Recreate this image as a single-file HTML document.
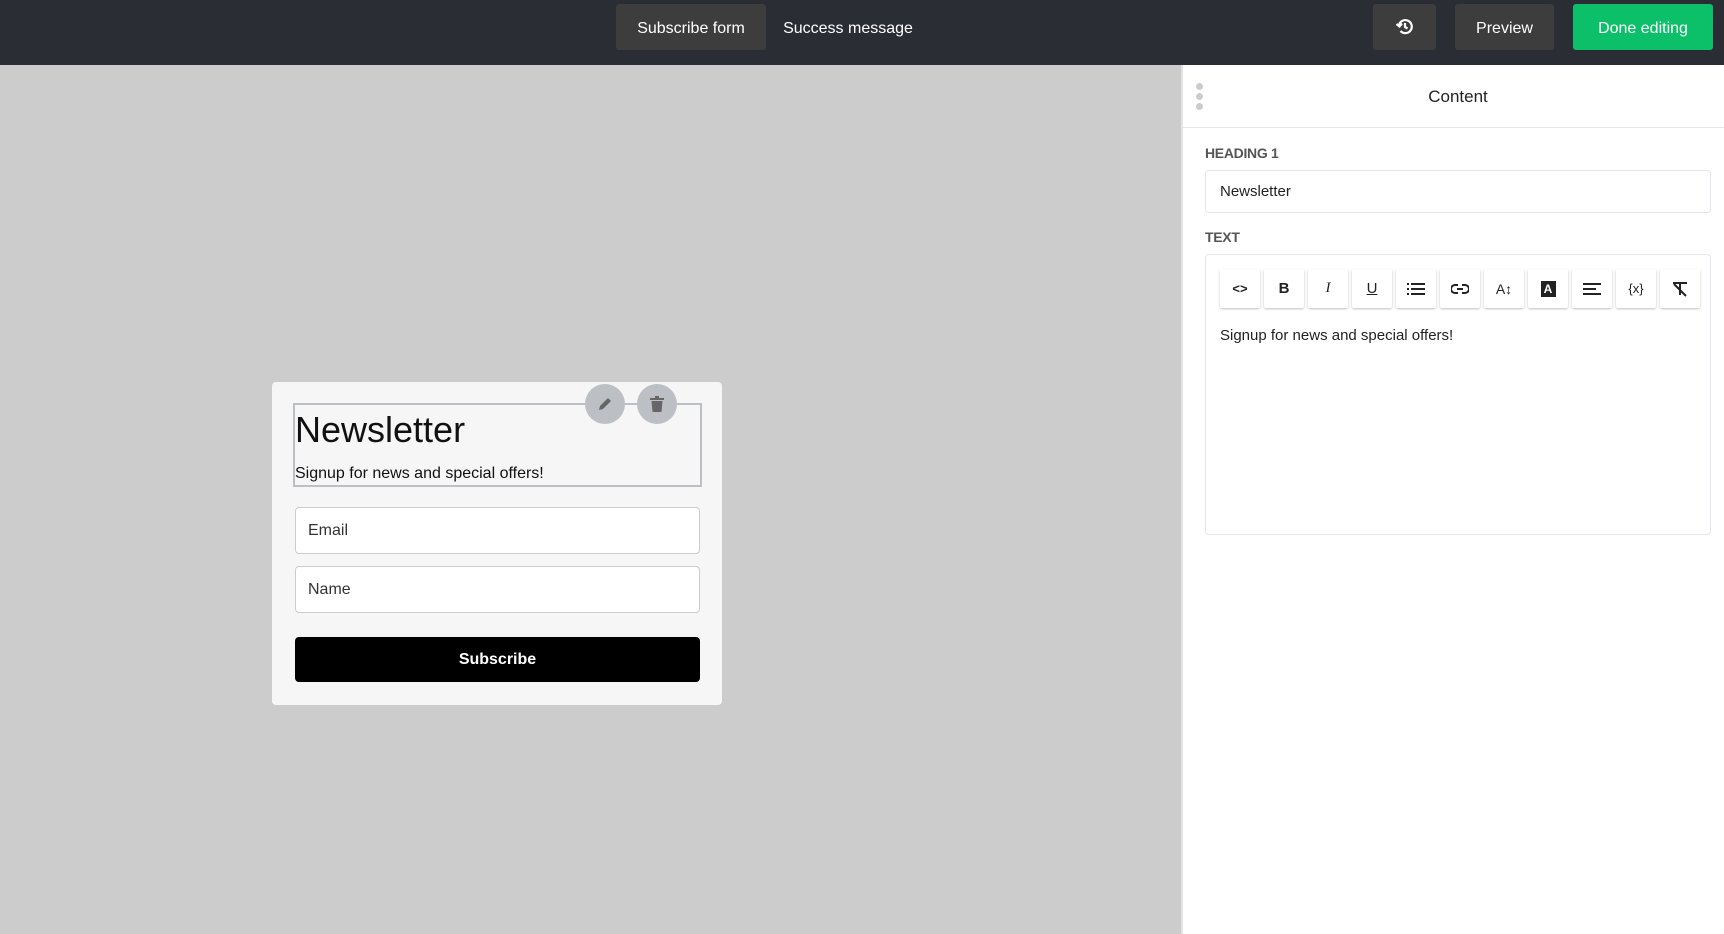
<!DOCTYPE html>
<html><head><style>
*{box-sizing:border-box;margin:0;padding:0}
body{width:1724px;height:934px;overflow:hidden;background:#ccc;font-family:"Liberation Sans",sans-serif;position:relative}
.top{position:absolute;left:0;top:0;width:1724px;height:65px;background:#2a2d33}
.tb{position:absolute;top:4px;height:46px;border-radius:3px;color:#fff;font-size:16px;display:flex;align-items:center;justify-content:center;padding-top:3px}
.panel{position:absolute;left:1181px;top:65px;width:543px;height:869px;background:#fff;border-left:2px solid #e4e4e4}
.lbl{position:absolute;left:22px;font-size:14px;font-weight:bold;color:#555;letter-spacing:-0.3px}
.ib{position:absolute;left:22px;width:506px;border:1px solid #e3e6ea;border-radius:4px;background:#fff}
.btn{position:absolute;top:14px;width:40px;height:39px;background:#fff;box-shadow:0 1px 2px rgba(0,0,0,.25);border-radius:2px;display:flex;align-items:center;justify-content:center;font-size:15px;color:#222}
.card{position:absolute;left:272px;top:382px;width:450px;height:323px;background:#f6f6f6;border-radius:4px}
.inp{position:absolute;left:23px;width:405px;height:47px;background:#fff;border:1px solid #ccc;border-radius:4px;font-size:16px;color:#333;padding-left:12px;line-height:45px}
.circ{position:absolute;width:40px;height:40px;border-radius:50%;background:#bcc0c4;display:flex;align-items:center;justify-content:center}
</style></head><body>
<div class="top">
 <div class="tb" style="left:616px;width:150px;background:#3d3d3d">Subscribe form</div>
 <div class="tb" style="left:782px;width:132px">Success message</div>
 <div class="tb" style="left:1373px;width:63px;background:#3d3d3d;padding-top:0"><svg width="20" height="20" viewBox="0 0 20 20" fill="none" stroke="#fff" stroke-width="2.2"><path d="M4 8a6.5 6.5 0 1 1 1.5 6"/><path d="M1.5 7l3 2.5 2.5-3" /><path d="M10 6v4l2.5 1.5"/></svg></div>
 <div class="tb" style="left:1455px;width:99px;background:#3d3d3d">Preview</div>
 <div class="tb" style="left:1573px;width:140px;background:#0cc06a">Done editing</div>
</div>
<div class="panel">
 <div style="position:absolute;left:13px;top:18px;width:8px">
  <div style="width:7px;height:7px;border-radius:50%;background:#ccc;margin-bottom:3px"></div>
  <div style="width:7px;height:7px;border-radius:50%;background:#ccc;margin-bottom:3px"></div>
  <div style="width:7px;height:7px;border-radius:50%;background:#ccc"></div></div>
 <div style="position:absolute;left:0;width:550px;top:22px;text-align:center;font-size:17px;color:#222">Content</div>
 <div style="position:absolute;left:0;top:62px;width:541px;height:1px;background:#e3e6ea"></div>
 <div class="lbl" style="top:80px">HEADING 1</div>
 <div class="ib" style="top:105px;height:43px;font-size:15px;color:#222;padding-left:14px;line-height:41px">Newsletter</div>
 <div class="lbl" style="top:164px">TEXT</div>
 <div class="ib" style="top:189px;height:281px">
  <div class="btn" style="left:14px;font-weight:bold;font-size:13px">&lt;&gt;</div>
  <div class="btn" style="left:58px;font-weight:bold">B</div>
  <div class="btn" style="left:102px;font-style:italic;font-family:'Liberation Serif',serif">I</div>
  <div class="btn" style="left:146px;text-decoration:underline">U</div>
  <div class="btn" style="left:190px"><svg width="18" height="14"><g fill="#222"><rect x="0" y="1" width="2" height="2"/><rect x="0" y="6" width="2" height="2"/><rect x="0" y="11" width="2" height="2"/><rect x="4" y="1" width="14" height="2"/><rect x="4" y="6" width="14" height="2"/><rect x="4" y="11" width="14" height="2"/></g></svg></div>
  <div class="btn" style="left:234px"><svg width="18" height="12" fill="none" stroke="#222" stroke-width="2"><path d="M7 2H4a4 4 0 0 0 0 8h3M11 2h3a4 4 0 0 1 0 8h-3M6 6h6"/></svg></div>
  <div class="btn" style="left:278px;font-size:14px">A↕</div>
  <div class="btn" style="left:322px"><div style="width:15px;height:16px;background:#222;color:#fff;font-size:12px;font-weight:bold;text-align:center;line-height:16px">A</div></div>
  <div class="btn" style="left:366px"><svg width="18" height="12"><g fill="#222"><rect y="0" width="18" height="2"/><rect y="5" width="13" height="2"/><rect y="10" width="18" height="2"/></g></svg></div>
  <div class="btn" style="left:410px;font-size:13px">{x}</div>
  <div class="btn" style="left:454px"><svg width="18" height="16" stroke="#222" stroke-width="2" fill="none"><path d="M2 2h14M9 2v12M3 3l12 12"/></svg></div>
  <div style="position:absolute;left:14px;top:72px;font-size:15px;color:#222">Signup for news and special offers!</div>
 </div>
</div>
<div class="card">
 <div style="position:absolute;left:21px;top:21px;width:409px;height:84px;border:2px solid #bcc0c4"></div>
 <div style="position:absolute;left:23px;top:27px;font-size:36px;color:#111">Newsletter</div>
 <div style="position:absolute;left:23px;top:83px;font-size:16px;color:#111">Signup for news and special offers!</div>
 <div class="circ" style="left:313px;top:2px"><svg width="16" height="16"><path d="M2 14l1-4 8-8 3 3-8 8z" fill="#666"/></svg></div>
 <div class="circ" style="left:365px;top:2px"><svg width="14" height="16"><rect x="0" y="2" width="14" height="2" fill="#666"/><rect x="5" y="0" width="4" height="2" fill="#666"/><path d="M1.5 5h11l-1 11h-9z" fill="#666"/></svg></div>
 <div class="inp" style="top:125px">Email</div>
 <div class="inp" style="top:184px">Name</div>
 <div style="position:absolute;left:23px;top:255px;width:405px;height:45px;background:#000;border-radius:4px;color:#fff;font-weight:bold;font-size:16px;text-align:center;line-height:45px">Subscribe</div>
</div>
</body></html>
